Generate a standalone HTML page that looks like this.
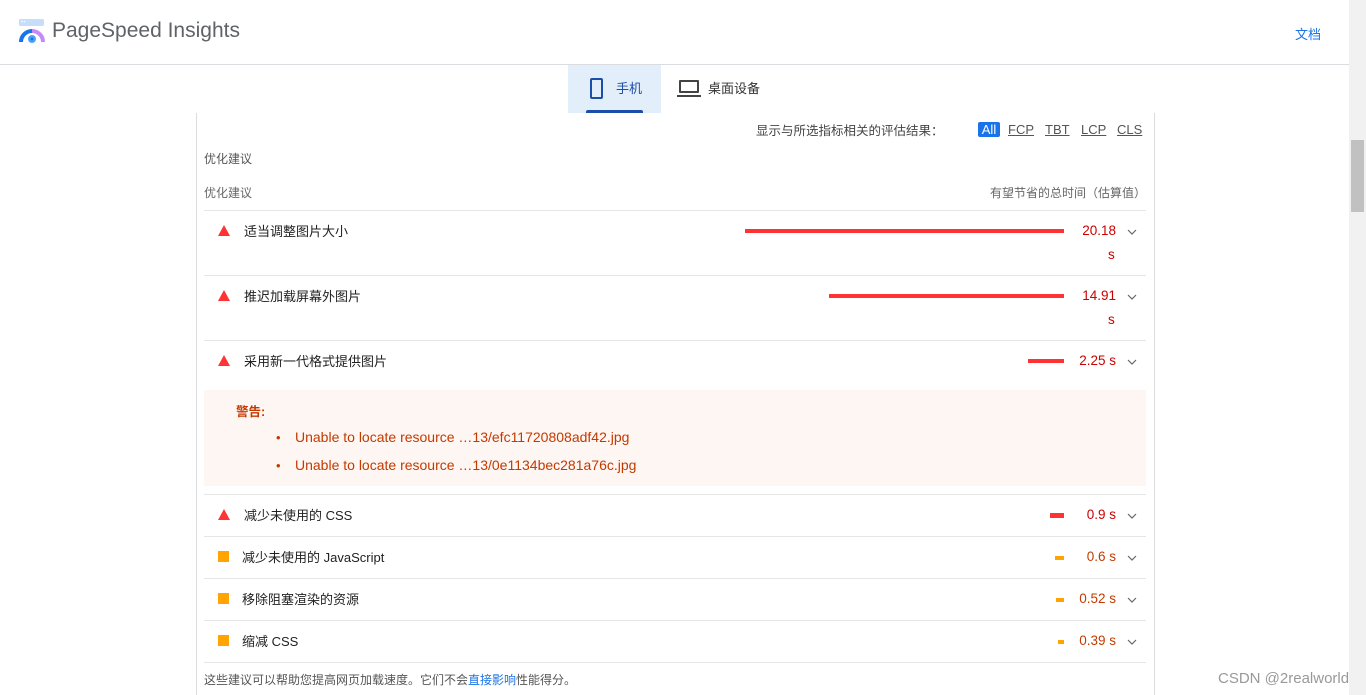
<!DOCTYPE html>
<html><head><meta charset="utf-8"><style>
*{margin:0;padding:0;box-sizing:border-box}
body{width:1366px;height:695px;overflow:hidden;background:#fff;font-family:"Liberation Sans","Noto Sans CJK SC",sans-serif;position:relative;color:#212121}
.a{position:absolute}
.t{font-size:13px;color:#212121}
.line{position:absolute;left:204px;width:942px;height:1px;background:#e6e6e6}
.val{position:absolute;font-size:13.5px;text-align:right;width:60px;left:1056px}
.chev{position:absolute;left:1126px;width:12px;height:8px}
</style></head><body>
<svg class="a" style="left:19px;top:19px" width="26" height="24" viewBox="0 0 26 24">
<rect x="0" y="0" width="25" height="7" rx="1.5" fill="#c6defc"/>
<circle cx="3" cy="2.5" r="0.8" fill="#fff"/><circle cx="5.5" cy="2.5" r="0.8" fill="#fff"/>
<path d="M2 23 A11 11 0 0 1 13 12" stroke="#1a73e8" stroke-width="4" fill="none"/>
<path d="M13 12 A11 11 0 0 1 24 23" stroke="#c58af9" stroke-width="4" fill="none"/>
<circle cx="13" cy="20" r="4" fill="#4fa3f7"/><circle cx="13" cy="20" r="1.5" fill="#1a73e8"/>
</svg>
<div class="a" style="left:52px;top:19px;font-size:21px;color:#5f6368">PageSpeed Insights</div>
<div class="a" style="left:1295px;top:24px;font-size:13px;color:#1a73e8">文档</div>
<div class="a" style="left:0;top:64px;width:1349px;height:1px;background:#dadce0"></div>
<div class="a" style="left:568px;top:65px;width:93px;height:48px;background:#e3eefb"></div>
<div class="a" style="left:586px;top:110px;width:57px;height:3px;background:#1a4ea8;border-radius:2px 2px 0 0"></div>
<div class="a" style="left:590px;top:78px;width:13px;height:21px;border:2px solid #1a4ea8;border-radius:2px"></div>
<div class="a" style="left:616px;top:78px;font-size:13px;color:#1a4ea8">手机</div>
<div class="a" style="left:679px;top:80px;width:20px;height:13px;border:2px solid #444;border-radius:1px"></div>
<div class="a" style="left:677px;top:95px;width:24px;height:2px;background:#444"></div>
<div class="a" style="left:708px;top:78px;font-size:13px;color:#333">桌面设备</div>
<div class="a" style="left:196px;top:113px;width:1px;height:582px;background:#dadce0"></div>
<div class="a" style="left:1154px;top:113px;width:1px;height:582px;background:#dadce0"></div>
<div class="a" style="left:756px;top:120px;font-size:12.5px;color:#444">显示与所选指标相关的评估结果：</div>
<div class="a" style="left:978px;top:122px;width:22px;height:15px;background:#1a73e8;border-radius:2px;color:#fff;font-size:13px;text-align:center;line-height:15px">All</div>
<div class="a" style="left:1008px;top:122px;font-size:13px;color:#555;text-decoration:underline">FCP</div>
<div class="a" style="left:1045px;top:122px;font-size:13px;color:#555;text-decoration:underline">TBT</div>
<div class="a" style="left:1081px;top:122px;font-size:13px;color:#555;text-decoration:underline">LCP</div>
<div class="a" style="left:1117px;top:122px;font-size:13px;color:#555;text-decoration:underline">CLS</div>
<div class="a" style="left:204px;top:150px;font-size:12px;color:#555">优化建议</div>
<div class="a" style="left:204px;top:184px;font-size:12px;color:#666">优化建议</div>
<div class="a" style="left:990px;top:184px;font-size:12px;color:#666">有望节省的总时间（估算值）</div>
<div class="line" style="top:210px"></div>
<div class="line" style="top:275px"></div>
<div class="line" style="top:340px"></div>
<div class="line" style="top:494px"></div>
<div class="line" style="top:536px"></div>
<div class="line" style="top:578px"></div>
<div class="line" style="top:620px"></div>
<div class="line" style="top:662px"></div>
<svg class="a" style="left:218px;top:225px" width="12" height="11"><path d="M6 0L12 11H0Z" fill="#f33"/></svg>
<div class="a t" style="left:244px;top:221px">适当调整图片大小</div>
<div class="a" style="left:745px;top:229px;width:319px;height:4px;background:#f33"></div>
<div class="val" style="top:223px;color:#c00">20.18</div>
<div class="a" style="left:1108px;top:247px;font-size:13.5px;color:#c00">s</div>
<svg class="a" style="left:218px;top:290px" width="12" height="11"><path d="M6 0L12 11H0Z" fill="#f33"/></svg>
<div class="a t" style="left:244px;top:286px">推迟加载屏幕外图片</div>
<div class="a" style="left:829px;top:294px;width:235px;height:4px;background:#f33"></div>
<div class="val" style="top:288px;color:#c00">14.91</div>
<div class="a" style="left:1108px;top:312px;font-size:13.5px;color:#c00">s</div>
<svg class="a" style="left:218px;top:355px" width="12" height="11"><path d="M6 0L12 11H0Z" fill="#f33"/></svg>
<div class="a t" style="left:244px;top:351px">采用新一代格式提供图片</div>
<div class="a" style="left:1028px;top:359px;width:36px;height:4px;background:#f33"></div>
<div class="val" style="top:353px;color:#c00">2.25 s</div>
<div class="a" style="left:204px;top:390px;width:942px;height:96px;background:#fef6f2"></div>
<div class="a" style="left:236px;top:401px;font-size:12.5px;font-weight:bold;color:#c33a00">警告:</div>
<div class="a" style="left:276px;top:430px;font-size:13px;color:#c33a00">•</div>
<div class="a" style="left:295px;top:429px;font-size:14px;color:#c33a00">Unable to locate resource …13/efc11720808adf42.jpg</div>
<div class="a" style="left:276px;top:458px;font-size:13px;color:#c33a00">•</div>
<div class="a" style="left:295px;top:457px;font-size:14px;color:#c33a00">Unable to locate resource …13/0e1134bec281a76c.jpg</div>
<svg class="a" style="left:218px;top:509px" width="12" height="11"><path d="M6 0L12 11H0Z" fill="#f33"/></svg>
<div class="a t" style="left:244px;top:505px">减少未使用的 CSS</div>
<div class="a" style="left:1050px;top:513px;width:14px;height:5px;background:#f33"></div>
<div class="val" style="top:507px;color:#c00">0.9 s</div>
<div class="a" style="left:218px;top:551px;width:11px;height:11px;background:#ffa400"></div>
<div class="a t" style="left:242px;top:547px">减少未使用的 JavaScript</div>
<div class="a" style="left:1055px;top:556px;width:9px;height:4px;background:#ffa400"></div>
<div class="val" style="top:549px;color:#c33a00">0.6 s</div>
<div class="a" style="left:218px;top:593px;width:11px;height:11px;background:#ffa400"></div>
<div class="a t" style="left:242px;top:589px">移除阻塞渲染的资源</div>
<div class="a" style="left:1056px;top:598px;width:8px;height:4px;background:#ffa400"></div>
<div class="val" style="top:591px;color:#c33a00">0.52 s</div>
<div class="a" style="left:218px;top:635px;width:11px;height:11px;background:#ffa400"></div>
<div class="a t" style="left:242px;top:631px">缩减 CSS</div>
<div class="a" style="left:1058px;top:640px;width:6px;height:4px;background:#ffa400"></div>
<div class="val" style="top:633px;color:#c33a00">0.39 s</div>
<svg class="chev" style="top:228px" viewBox="0 0 12 8"><path d="M2 2L6 6L10 2" stroke="#666" stroke-width="1.2" fill="none"/></svg>
<svg class="chev" style="top:293px" viewBox="0 0 12 8"><path d="M2 2L6 6L10 2" stroke="#666" stroke-width="1.2" fill="none"/></svg>
<svg class="chev" style="top:358px" viewBox="0 0 12 8"><path d="M2 2L6 6L10 2" stroke="#666" stroke-width="1.2" fill="none"/></svg>
<svg class="chev" style="top:512px" viewBox="0 0 12 8"><path d="M2 2L6 6L10 2" stroke="#666" stroke-width="1.2" fill="none"/></svg>
<svg class="chev" style="top:554px" viewBox="0 0 12 8"><path d="M2 2L6 6L10 2" stroke="#666" stroke-width="1.2" fill="none"/></svg>
<svg class="chev" style="top:596px" viewBox="0 0 12 8"><path d="M2 2L6 6L10 2" stroke="#666" stroke-width="1.2" fill="none"/></svg>
<svg class="chev" style="top:638px" viewBox="0 0 12 8"><path d="M2 2L6 6L10 2" stroke="#666" stroke-width="1.2" fill="none"/></svg>
<div class="a" style="left:204px;top:671px;font-size:12px;color:#555">这些建议可以帮助您提高网页加载速度。它们不会<span style="color:#1a73e8">直接影响</span>性能得分。</div>
<div class="a" style="left:1349px;top:0;width:17px;height:695px;background:#f1f1f1"></div>
<div class="a" style="left:1351px;top:140px;width:13px;height:72px;background:#c1c1c1"></div>
<div class="a" style="left:1218px;top:670px;font-size:15px;color:#999">CSDN @2realworld</div>
</body></html>
